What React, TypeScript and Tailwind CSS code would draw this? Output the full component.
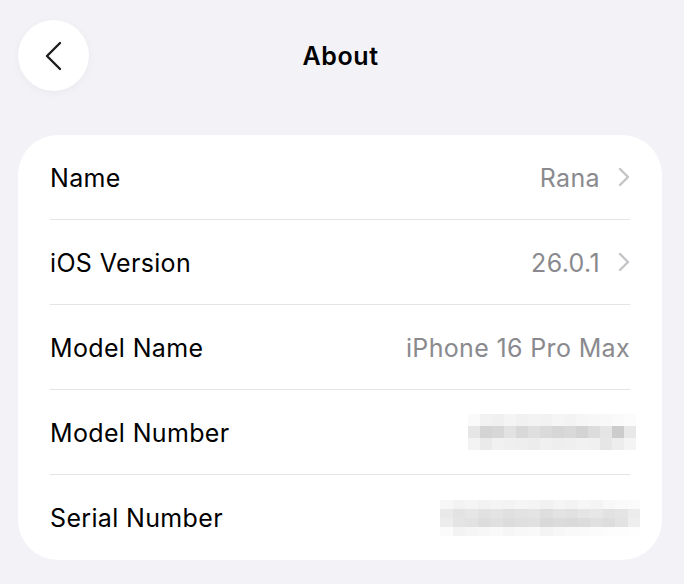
import React from "react";

const blur1 = [
  ["#fafafa", "#f2f2f2", "#f0f0f0", "#f4f4f4", "#f1f1f1", "#f3f3f3", "#f2f2f2", "#f5f5f5", "#f3f3f3", "#f6f6f6", "#f7f7f7", "#f8f8f8", "#fafafa", "#fcfcfc"],
  ["#e6e6e6", "#d4d4d4", "#d7d7d7", "#e2e2e2", "#d8d8d8", "#dfdfdf", "#dadada", "#d6d6d6", "#d9d9d9", "#d3d3d3", "#dcdcdc", "#e5e5e5", "#cccccc", "#e8e8e8"],
  ["#f3f3f3", "#eaeaea", "#f1f1f1", "#efefef", "#eeeeee", "#ececec", "#f0f0f0", "#eeeeee", "#efefef", "#f1f1f1", "#f0f0f0", "#e6e6e6", "#ededed", "#f4f4f4"],
];
const blur2 = [
  ["#f7f7f7", "#f3f3f3", "#f5f5f5", "#f2f2f2", "#f4f4f4", "#f3f3f3", "#f5f5f5", "#f4f4f4", "#f1f1f1", "#f5f5f5", "#f3f3f3", "#f6f6f6", "#f4f4f4", "#f8f8f8", "#fafafa", "#fbfbfb"],
  ["#e9e9e9", "#e3e3e3", "#e6e6e6", "#e1e1e1", "#e4e4e4", "#e0e0e0", "#e2e2e2", "#e4e4e4", "#dedede", "#e3e3e3", "#e1e1e1", "#e5e5e5", "#e7e7e7", "#e2e2e2", "#e4e4e4", "#ececec"],
  ["#ececec", "#e4e4e4", "#e2e2e2", "#dddddd", "#e0e0e0", "#dcdcdc", "#dfdfdf", "#e1e1e1", "#d9d9d9", "#dbdbdb", "#dadada", "#dcdcdc", "#e0e0e0", "#dddddd", "#e3e3e3", "#eeeeee"],
  ["#fbfbfb", "#f3f3f3", "#f5f5f5", "#f7f7f7", "#f9f9f9", "#f6f6f6", "#f8f8f8", "#f9f9f9", "#f4f4f4", "#f7f7f7", "#f9f9f9", "#fafafa", "#fbfbfb", "#fcfcfc", "#fdfdfd", "#fefefe"],
];

function Pixels({ grid, cell }: { grid: string[][]; cell: number }) {
  return (
    <div className="flex flex-col">
      {grid.map((row, i) => (
        <div key={i} className="flex">
          {row.map((c, j) => (
            <div key={j} style={{ width: cell, height: cell === 12 ? 12 : 9, backgroundColor: c }} />
          ))}
        </div>
      ))}
    </div>
  );
}

function Chevron() {
  return (
    <svg width="12" height="20" viewBox="0 0 12 20" className="ml-[18px]">
      <path d="M2 2 L10 10 L2 18" fill="none" stroke="#c4c4c8" strokeWidth="2.4" strokeLinecap="round" strokeLinejoin="round" />
    </svg>
  );
}

function Row({ label, value, chevron, last, children }: { label: string; value?: string; chevron?: boolean; last?: boolean; children?: React.ReactNode }) {
  return (
    <div className={`h-[85px] mx-[32px] flex items-center justify-between ${last ? "" : "border-b border-[#e3e3e8]"}`}>
      <span className="text-[25px] text-black tracking-[0.35px] pt-[3px]">{label}</span>
      <div className="flex items-center">
        {value && <span className="text-[25px] text-[#8a8a8e] tracking-[0.35px] pt-[3px]">{value}</span>}
        {chevron && <Chevron />}
        {children}
      </div>
    </div>
  );
}

export default function App() {
  return (
    <div
      className="w-[684px] h-[584px] bg-[#f2f2f7] overflow-hidden"
      style={{ fontFamily: "Inter, 'Noto Sans', sans-serif" }}
    >
      <div className="relative h-[135px]">
        <div className="absolute left-[18px] top-[20px] w-[71px] h-[71px] rounded-full bg-white shadow-[0_2px_10px_rgba(0,0,0,0.04)] flex items-center justify-center">
          <svg width="22" height="32" viewBox="0 0 22 32">
            <path d="M17 3 L4 16 L17 29" fill="none" stroke="#1c1c1e" strokeWidth="2.4" strokeLinecap="round" strokeLinejoin="round" />
          </svg>
        </div>
        <div className="absolute left-0 right-0 top-[38px] text-center text-[25px] font-semibold text-black tracking-[0.6px] pr-[3px]">
          About
        </div>
      </div>
      <div className="mx-[18px] w-[644px] bg-white rounded-[40px] overflow-hidden">
        <Row label="Name" value="Rana" chevron />
        <Row label="iOS Version" value="26.0.1" chevron />
        <Row label="Model Name" value="iPhone 16 Pro Max" />
        <Row label="Model Number">
          <div className="mr-[-6px]">
            <Pixels grid={blur1} cell={12} />
          </div>
        </Row>
        <Row label="Serial Number" last>
          <div className="mr-[-10px]">
            <Pixels grid={blur2} cell={12.5} />
          </div>
        </Row>
      </div>
    </div>
  );
}
